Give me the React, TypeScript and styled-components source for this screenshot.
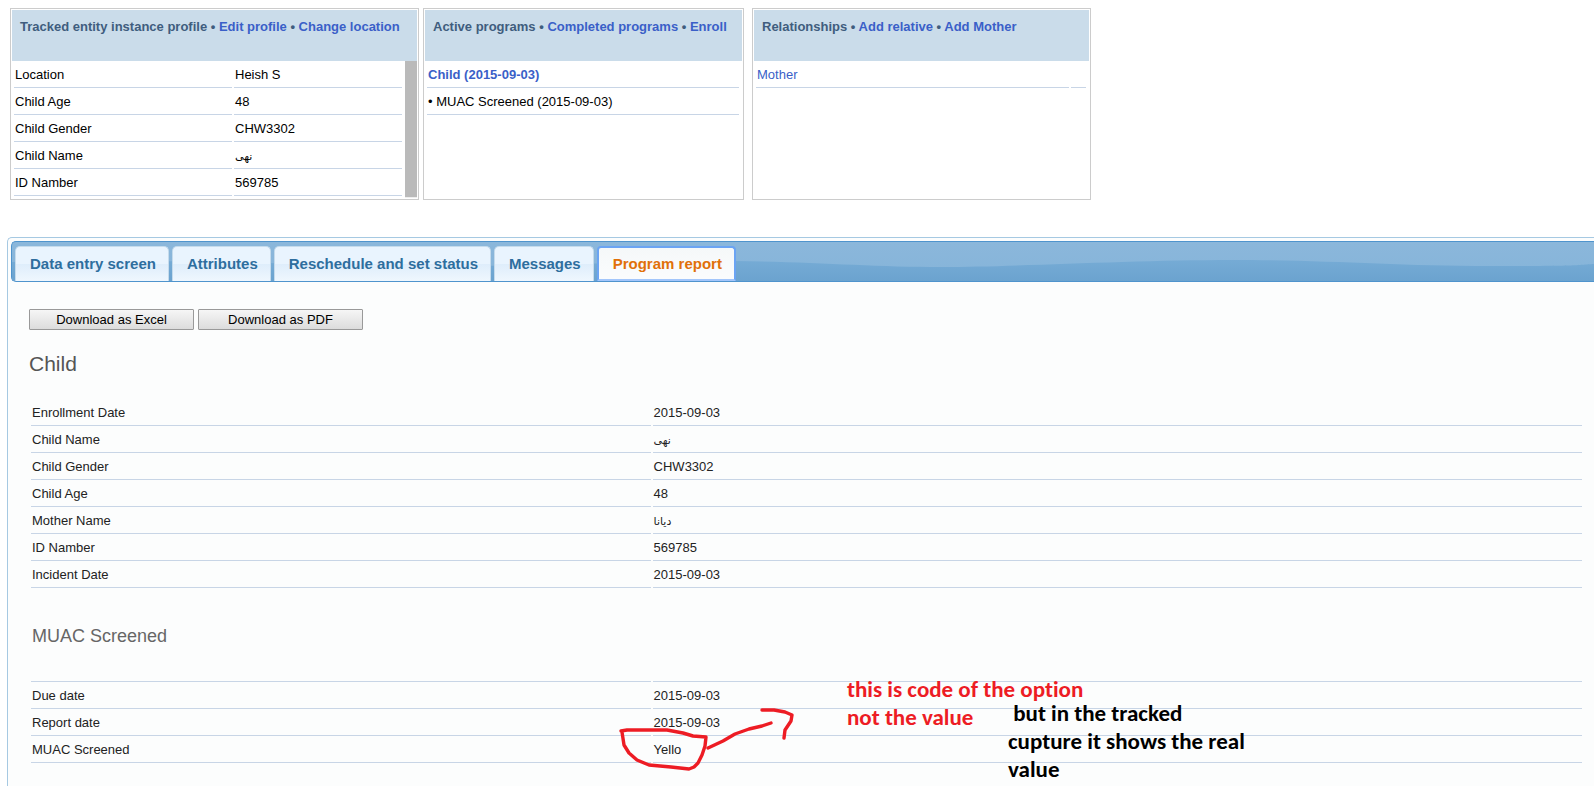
import React from "react";
import styled, { createGlobalStyle, css } from "styled-components";

const GlobalStyle = createGlobalStyle`
  * { box-sizing: border-box; }
  body {
    margin: 0;
    background: #fff;
    color: #000;
    font: 13px/15px "Liberation Sans", Arial, "DejaVu Sans", sans-serif;
    overflow-x: hidden;
  }
`;

const Page = styled.div`
  min-height: 100vh;
  display: flex;
  flex-direction: column;
  padding: 8px 0 0 7px;
`;

const Dashboard = styled.section`
  display: flex;
  align-items: stretch;
  padding-left: 3px;
  height: 192px;
`;

const Panel = styled.article<{ $width: number; $gap: number }>`
  flex: 0 0 ${(p) => p.$width}px;
  margin-right: ${(p) => p.$gap}px;
  border: 1px solid #ccc;
  padding: 1px;
  display: flex;
  flex-direction: column;
`;

const PanelHeader = styled.header`
  flex: 0 0 51px;
  padding: 9px 8px;
  background: #cadcea;
  color: #3f5d7e;
  font-weight: bold;
  white-space: nowrap;
`;

const PanelTitle = styled.h2`
  display: inline;
  font-size: 13px;
  margin: 0;
`;

const TextLink = styled.a<{ $bold?: boolean }>`
  color: #3a5fc8;
  text-decoration: none;
  font-weight: ${(p) => (p.$bold ? "bold" : "inherit")};
`;

const PanelBody = styled.div`
  flex: 1;
  display: flex;
  align-items: stretch;
  padding-right: 1px;
`;

const ScrollBody = styled(PanelBody)`
  padding-right: 0;
`;

const ScrollTrack = styled.div`
  flex: 0 0 12px;
  margin-left: 1px;
  background: #eee;
  padding-bottom: 1px;
`;

const ScrollThumb = styled.div`
  height: 100%;
  background: #bababa;
`;

const DataTable = styled.table<{ $first?: string; $ink?: string }>`
  flex: 1;
  width: 100%;
  align-self: flex-start;
  table-layout: fixed;
  border-collapse: separate;
  border-spacing: 2px;
  color: ${(p) => p.$ink ?? "#000"};

  td, th {
    height: 25px;
    padding: 1px 1px 3px;
    border-bottom: 1px solid #c8d5e6;
    text-align: left;
    font-weight: normal;
    vertical-align: middle;
  }
  tr:first-child > :first-child { width: ${(p) => p.$first ?? "auto"}; }
`;

const Arabic = styled.span`
  font: 11px/13px "DejaVu Sans", sans-serif;
`;

const Tabs = styled.section`
  flex: 1;
  margin-top: 37px;
  border: 1px solid #a6c9e2;
  border-right: 0;
  border-bottom: 0;
  border-top-left-radius: 5px;
  padding: 3px 0 0 3px;
  background: #fcfdfd;
  color: #222;
`;

const TabStrip = styled.nav`
  position: relative;
  display: flex;
  gap: 3px;
  height: 41px;
  padding: 4px 3px 0;
  border: 1px solid #4f94cd;
  border-right: 0;
  border-radius: 5px 0 0 5px;
  overflow: hidden;
  background: linear-gradient(#8bb7db, #85b4d9);
`;

const Wave = styled.svg`
  position: absolute;
  inset: 0;
  width: 100%;
  height: 100%;
`;

const Tab = styled.button<{ $active?: boolean }>`
  position: relative;
  padding: 0 12px 2px 14px;
  border: 1px solid #c5dbec;
  border-bottom: 0;
  border-radius: 5px 5px 0 0;
  background: linear-gradient(#e9f4fe 50%, #deedfb 50%, #eff7fe);
  color: #2e6e9e;
  font: bold 15px/17px "Liberation Sans", Arial, sans-serif;
  white-space: nowrap;
  ${(p) =>
    p.$active &&
    css`
      padding-bottom: 0;
      border: 2px solid #6ba4f3;
      border-bottom-color: #a3c6fb;
      border-radius: 4px 4px 0 0;
      background: linear-gradient(#f5f8f9, #fbfcfd);
      color: #e17009;
    `}
`;

const Report = styled.div`
  padding: 27px 10px 16px 18px;
`;

const Actions = styled.div`
  display: flex;
  gap: 4px;
`;

const ActionButton = styled.button`
  width: 165px;
  height: 21px;
  padding: 0;
  border: 1px solid #999;
  border-radius: 1px;
  background: linear-gradient(#f6f6f6, #dcdcdc);
  color: #000;
  font: inherit;
`;

const ProgramTitle = styled.h3`
  margin: 21px 0 22px;
  color: #555;
  font-size: 21px;
  line-height: 26px;
  font-weight: normal;
`;

const StageTitle = styled.h4`
  margin: 0 0 30px;
  color: #666;
  font-size: 18px;
  line-height: 24px;
  font-weight: normal;
`;

const Stage = styled.div`
  position: relative;
  margin-top: 31px;
`;

const Sketch = styled.svg`
  position: absolute;
  left: 590px;
  top: 98px;
  width: 180px;
  height: 70px;
  overflow: visible;
`;

const Note = styled.p<{ $left: number; $top: number; $color: string }>`
  position: absolute;
  left: ${(p) => p.$left}px;
  top: ${(p) => p.$top}px;
  margin: 0;
  color: ${(p) => p.$color};
  font: bold 23px/28px Carlito, Lato, sans-serif;
  font-variant-ligatures: none;
  white-space: pre;
`;

type Row = [string, React.ReactNode];

const nameText = <Arabic lang="ar">نهى</Arabic>;

const profile: Row[] = [
  ["Location", "Heish S"],
  ["Child Age", "48"],
  ["Child Gender", "CHW3302"],
  ["Child Name", nameText],
  ["ID Namber", "569785"],
];

const enrollment: Row[] = [
  ["Enrollment Date", "2015-09-03"],
  ["Child Name", nameText],
  ["Child Gender", "CHW3302"],
  ["Child Age", "48"],
  ["Mother Name", <Arabic lang="ar">ديانا</Arabic>],
  ["ID Namber", "569785"],
  ["Incident Date", "2015-09-03"],
];

const stage: Row[] = [
  ["Due date", "2015-09-03"],
  ["Report date", "2015-09-03"],
  ["MUAC Screened", "Yello"],
];

const tabs = ["Data entry screen", "Attributes", "Reschedule and set status", "Messages", "Program report"];

const Rows = ({ rows }: { rows: Row[] }) => (
  <>
    {rows.map(([label, value]) => (
      <tr key={label}>
        <th scope="row">{label}</th>
        <td>{value}</td>
      </tr>
    ))}
  </>
);

const Header = ({ title, links }: { title: string; links: string[] }) => (
  <PanelHeader>
    <PanelTitle>{title}</PanelTitle>
    {links.map((l) => (
      <React.Fragment key={l}>
        {" • "}
        <TextLink href="#">{l}</TextLink>
      </React.Fragment>
    ))}
  </PanelHeader>
);

export default function App() {
  return (
    <Page>
      <GlobalStyle />
      <Dashboard>
        <Panel $width={409} $gap={4}>
          <Header title="Tracked entity instance profile" links={["Edit profile", "Change location"]} />
          <ScrollBody>
            <DataTable $first="218px">
              <tbody>
                <Rows rows={profile} />
              </tbody>
            </DataTable>
            <ScrollTrack>
              <ScrollThumb />
            </ScrollTrack>
          </ScrollBody>
        </Panel>
        <Panel $width={321} $gap={8}>
          <Header title="Active programs" links={["Completed programs", "Enroll"]} />
          <PanelBody>
            <DataTable>
              <tbody>
                <tr>
                  <td>
                    <TextLink href="#" $bold>
                      Child (2015-09-03)
                    </TextLink>
                  </td>
                </tr>
                <tr>
                  <td>• MUAC Screened (2015-09-03)</td>
                </tr>
              </tbody>
            </DataTable>
          </PanelBody>
        </Panel>
        <Panel $width={339} $gap={0}>
          <Header title="Relationships" links={["Add relative", "Add Mother"]} />
          <PanelBody>
            <DataTable $first="313px">
              <tbody>
                <tr>
                  <td>
                    <TextLink href="#">Mother</TextLink>
                  </td>
                  <td />
                </tr>
              </tbody>
            </DataTable>
          </PanelBody>
        </Panel>
      </Dashboard>

      <Tabs>
        <TabStrip>
          <Wave viewBox="0 0 1582 39" preserveAspectRatio="none" aria-hidden="true">
            <defs>
              <linearGradient id="wave" x1="0" y1="0" x2="0" y2="1">
                <stop offset="0" stopColor="#76abd5" />
                <stop offset="1" stopColor="#6ba3cf" />
              </linearGradient>
            </defs>
            <path
              d="M0 20C200 16 300 25 450 24S640 18 723 19S860 25 930 25S1120 18 1220 18S1380 24 1480 24S1560 23 1582 22V39H0Z"
              fill="url(#wave)"
            />
          </Wave>
          {tabs.map((t, i) => (
            <Tab key={t} type="button" $active={i === tabs.length - 1}>
              {t}
            </Tab>
          ))}
        </TabStrip>
        <Report>
          <Actions>
            <ActionButton type="button">Download as Excel</ActionButton>
            <ActionButton type="button">Download as PDF</ActionButton>
          </Actions>
          <ProgramTitle>Child</ProgramTitle>
          <DataTable $first="40%" $ink="#222">
            <tbody>
              <Rows rows={enrollment} />
            </tbody>
          </DataTable>
          <Stage>
            <DataTable $first="40%" $ink="#222">
              <tbody>
                <tr>
                  <td>
                    <StageTitle>MUAC Screened</StageTitle>
                  </td>
                  <td />
                </tr>
                <Rows rows={stage} />
              </tbody>
            </DataTable>
            <Sketch viewBox="0 0 180 70" aria-hidden="true">
              <g fill="none" stroke="#ed1c24" strokeWidth="3.4" strokeLinecap="round" strokeLinejoin="round">
                <path d="M2 12L8 11H48L64 14L74 17L87 18L86 27L83 36L79 44L75 48L70 50L52 48L30 46L18 41L10 34L5 26L3 13" />
                <path d="M89 29L104 22L116 15L130 10L143 7L152 4" />
                <path d="M143 -9H155L166 -7L173 -4L172 2L166 11L165 19" />
              </g>
            </Sketch>
            <Note $left={818} $top={54} $color="#ed1c24">
              {"this is code of the option\nnot the value"}
            </Note>
            <Note $left={979} $top={78} $color="#000">
              {" but in the tracked\ncupture it shows the real\nvalue"}
            </Note>
          </Stage>
        </Report>
      </Tabs>
    </Page>
  );
}
